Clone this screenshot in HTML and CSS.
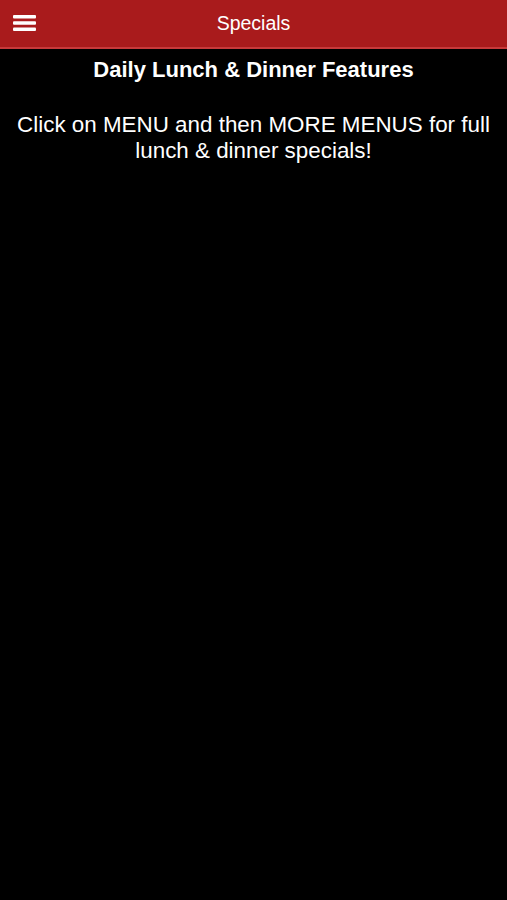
FILE: index.html
```html
<!DOCTYPE html>
<html>
<head>
<meta charset="utf-8">
<link rel="stylesheet" href="styles.css">
</head>
<body>
<header class="topbar">
  <button class="menu-btn" aria-label="Menu">
    <svg width="23" height="18" viewBox="0 0 23 18"><rect x="0" y="1" width="23" height="3.4" rx="1" fill="#fff"/><rect x="0" y="7.3" width="23" height="3.4" rx="1" fill="#fff"/><rect x="0" y="13.6" width="23" height="3.4" rx="1" fill="#fff"/></svg>
  </button>
  <h1 class="title">Specials</h1>
</header>
<main class="content">
  <h2 class="heading">Daily Lunch &amp; Dinner Features</h2>
  <p class="note">Click on MENU and then MORE MENUS for full lunch &amp; dinner specials!</p>
</main>
</body>
</html>
```
FILE: styles.css
```css
html, body {
  margin: 0;
  padding: 0;
  background: #000;
  color: #fff;
  font-family: "Liberation Sans", Arial, sans-serif;
}
.topbar {
  position: relative;
  height: 47px;
  background: #a91b1c;
  border-bottom: 2px solid #c8393a;
  display: flex;
  align-items: center;
  justify-content: center;
}
.menu-btn {
  position: absolute;
  left: 13px;
  top: 14px;
  padding: 0;
  border: 0;
  background: none;
  line-height: 0;
}
.title {
  margin: 0;
  font-size: 19.5px;
  font-weight: normal;
}
.content {
  text-align: center;
  padding: 8px 8px 0;
}
.heading {
  margin: 0;
  font-size: 22px;
  font-weight: bold;
  line-height: 26px;
}
.note {
  margin: 29px 0 0;
  font-size: 22.4px;
  line-height: 26px;
}
```
